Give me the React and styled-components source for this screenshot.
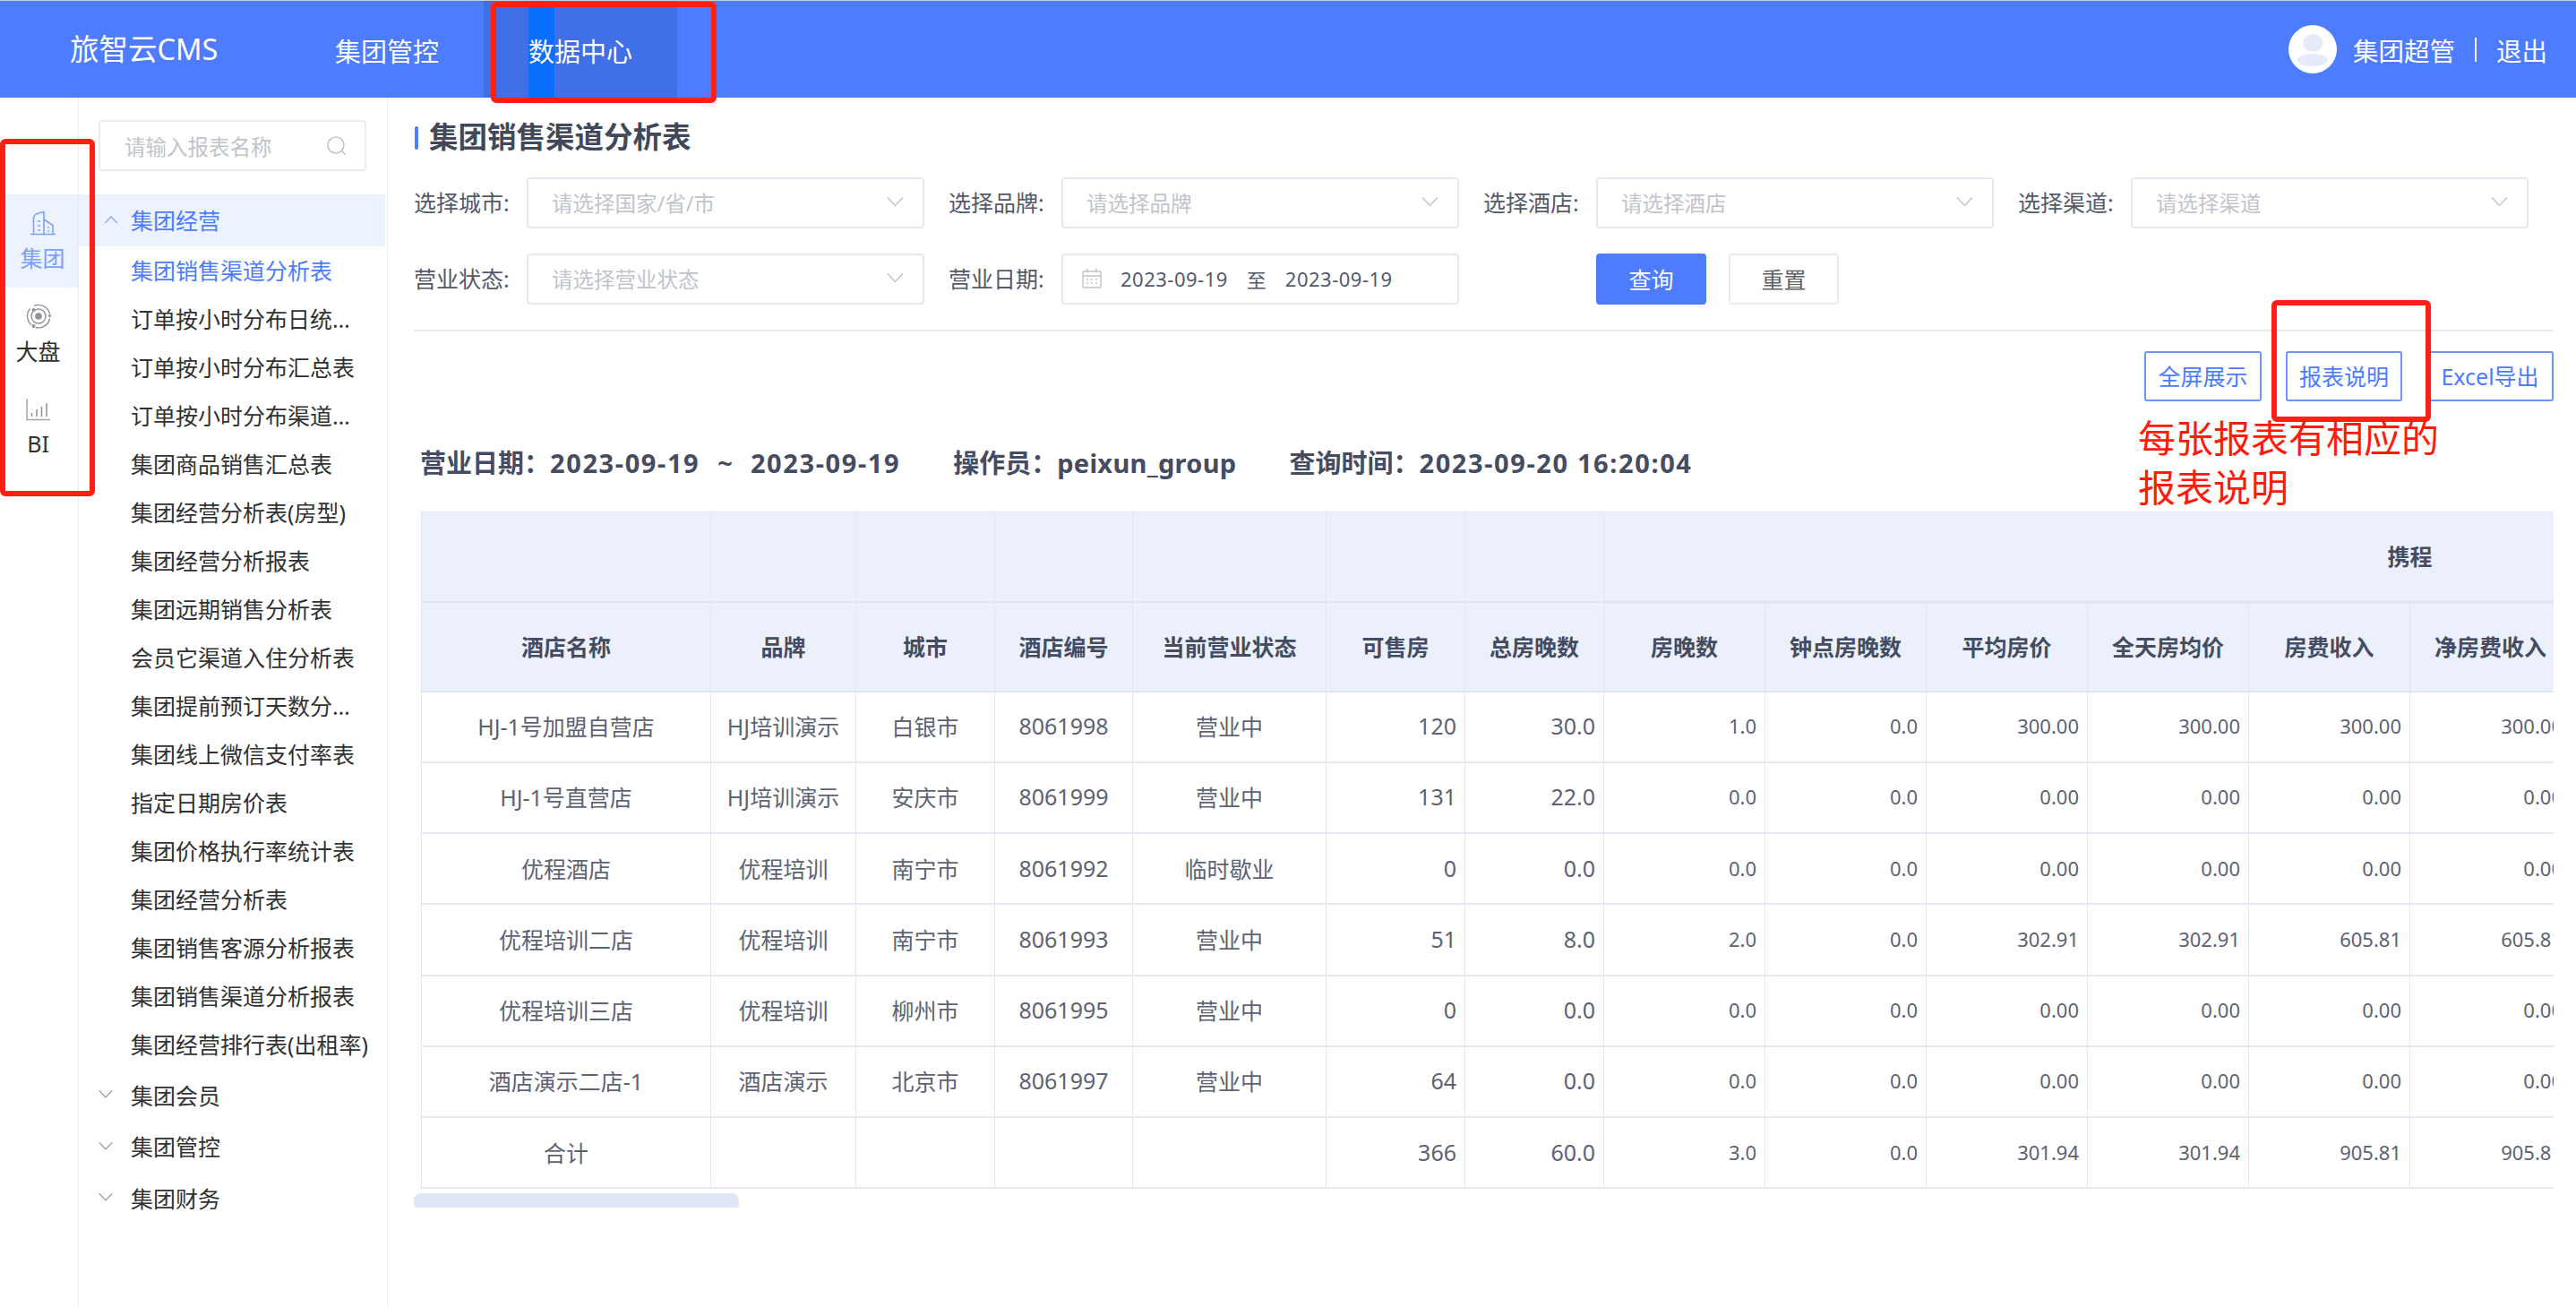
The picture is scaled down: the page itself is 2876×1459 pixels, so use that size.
import React from "react";
import styled, {createGlobalStyle} from "styled-components";

const FONT = `"Noto Sans", "Noto Sans CJK SC", sans-serif`;

const menuItems = [
  "集团销售渠道分析表",
  "订单按小时分布日统计表",
  "订单按小时分布汇总表",
  "订单按小时分布渠道汇总表",
  "集团商品销售汇总表",
  "集团经营分析表(房型)",
  "集团经营分析报表",
  "集团远期销售分析表",
  "会员它渠道入住分析表",
  "集团提前预订天数分析表",
  "集团线上微信支付率表",
  "指定日期房价表",
  "集团价格执行率统计表",
  "集团经营分析表",
  "集团销售客源分析报表",
  "集团销售渠道分析报表",
  "集团经营排行表(出租率)",
];

const columns = [323, 162, 155, 154, 216, 155, 155, 180, 180, 180, 180, 180, 180, 180, 180, 180, 180];
const fixedHead = ["酒店名称", "品牌", "城市", "酒店编号", "当前营业状态", "可售房", "总房晚数"];
const ctripHead = ["房晚数", "钟点房晚数", "平均房价", "全天房均价", "房费收入", "净房费收入", "", "", "", ""];

const rows = [
  ["HJ-1号加盟自营店", "HJ培训演示", "白银市", "8061998", "营业中", "120", "30.0", "1.0", "0.0", "300.00", "300.00", "300.00", "300.00"],
  ["HJ-1号直营店", "HJ培训演示", "安庆市", "8061999", "营业中", "131", "22.0", "0.0", "0.0", "0.00", "0.00", "0.00", "0.00"],
  ["优程酒店", "优程培训", "南宁市", "8061992", "临时歇业", "0", "0.0", "0.0", "0.0", "0.00", "0.00", "0.00", "0.00"],
  ["优程培训二店", "优程培训", "南宁市", "8061993", "营业中", "51", "8.0", "2.0", "0.0", "302.91", "302.91", "605.81", "605.81"],
  ["优程培训三店", "优程培训", "柳州市", "8061995", "营业中", "0", "0.0", "0.0", "0.0", "0.00", "0.00", "0.00", "0.00"],
  ["酒店演示二店-1", "酒店演示", "北京市", "8061997", "营业中", "64", "0.0", "0.0", "0.0", "0.00", "0.00", "0.00", "0.00"],
  ["合计", "", "", "", "", "366", "60.0", "3.0", "0.0", "301.94", "301.94", "905.81", "905.81"],
];

const Chevron = ({up, size = 19, color = "#c0c4cc"}) => (
  <svg width={size} height={size * 0.55} viewBox="0 0 20 11" fill="none" stroke={color} strokeWidth="1.5">
    <path d={up ? "M1 10.500L10 1l9 9.500" : "M1 .5L10 10l9-9.500"}/>
  </svg>
);

const SearchIcon = () => (
  <svg width="24" height="24" viewBox="0 0 24 24" fill="none" stroke="#c0c4cc" strokeWidth="1.6">
    <circle cx="11" cy="11" r="9"/>
    <path d="M17.500 17.500l4 4"/>
  </svg>
);

const CalendarIcon = () => (
  <svg width="22" height="22" viewBox="0 0 22 22" fill="none" stroke="#c0c4cc" strokeWidth="1.4">
    <rect x="1" y="3" width="20" height="18" rx="1"/>
    <path d="M1 8h20M6 0v4M16 0v4M5 12h2M10 12h2M15 12h2M5 16h2M10 16h2M15 16h2"/>
  </svg>
);

const BuildingIcon = () => (
  <svg width="30" height="28" viewBox="0 0 30 28" fill="none" stroke="#7d9ffc" strokeWidth="1.6">
    <path d="M1 26.500h28M4.500 26V9.500Q4.500 4 10 3l6-1.500V26M16 10l10 6.500V26M9 12h3M9 17h3M9 22h3M20 19h2M20 23h2"/>
  </svg>
);

const OrbitIcon = () => (
  <svg width="28" height="28" viewBox="0 0 28 28" fill="none" stroke="#8e919a" strokeWidth="1.400">
    <path d="M9 2.500A12.800 12.800 0 0 1 26.600 11.500M26.600 16.500A12.800 12.800 0 0 1 11 26.500M6 23.500A12.800 12.800 0 0 1 4.500 5.500"/>
    <circle cx="14" cy="14" r="8"/>
    <circle cx="14" cy="14" r="3.800" fill="#8e919a" stroke="none"/>
    <circle cx="8.500" cy="7" r="2" fill="#8e919a" stroke="none"/>
    <circle cx="26.500" cy="13.500" r="1.500" fill="#8e919a" stroke="none"/>
    <circle cx="8.500" cy="25" r="2" fill="#8e919a" stroke="none"/>
  </svg>
);

const BarsIcon = () => (
  <svg width="27" height="25" viewBox="0 0 27 25" fill="none" stroke="#a2a5ac" strokeWidth="1.500">
    <path d="M1 0v23.500h26"/>
    <path d="M6.500 20v-4M12 20V12M17.500 20V9M23 20V5" stroke="#8e919a"/>
  </svg>
);

const App = () => {
  return (
      <Page>
        <GlobalStyle/>
        <Header>
          <Logo>旅智云CMS</Logo>
          <NavItem>集团管控</NavItem>
          <NavItem $active><NavText>数据中心</NavText></NavItem>
          <UserBox>
            <Avatar/>
            <span>集团超管</span>
            <UserDivider/>
            <span>退出</span>
          </UserBox>
        </Header>

        <Body>
          <Rail>
            <RailItem $active>
              <BuildingIcon/>
              <RailLabel>集团</RailLabel>
            </RailItem>
            <RailItem>
              <OrbitIcon/>
              <RailLabel>大盘</RailLabel>
            </RailItem>
            <RailItem>
              <BarsIcon/>
              <RailLabel>BI</RailLabel>
            </RailItem>
          </Rail>

          <MenuPanel>
            <SearchBox>
              <SearchText>请输入报表名称</SearchText>
              <SearchIcon/>
            </SearchBox>
            <MenuSection $open>
              <Chevron up size={16} color="#7d9ffc"/>
              集团经营
            </MenuSection>
            {menuItems.map((item, i) => (
                <MenuItem key={item} $active={i === 0}>{item}</MenuItem>
            ))}
            <MenuSection><Chevron size={16} color="#909399"/>集团会员</MenuSection>
            <MenuSection><Chevron size={16} color="#909399"/>集团管控</MenuSection>
            <MenuSection><Chevron size={16} color="#909399"/>集团财务</MenuSection>
          </MenuPanel>

          <Main>
            <Title>集团销售渠道分析表</Title>
            <Filters>
              <Field>
                <FieldLabel>选择城市:</FieldLabel>
                <Select><span>请选择国家/省/市</span><Chevron/></Select>
              </Field>
              <Field>
                <FieldLabel>选择品牌:</FieldLabel>
                <Select><span>请选择品牌</span><Chevron/></Select>
              </Field>
              <Field>
                <FieldLabel>选择酒店:</FieldLabel>
                <Select><span>请选择酒店</span><Chevron/></Select>
              </Field>
              <Field>
                <FieldLabel>选择渠道:</FieldLabel>
                <Select><span>请选择渠道</span><Chevron/></Select>
              </Field>
              <Field>
                <FieldLabel>营业状态:</FieldLabel>
                <Select><span>请选择营业状态</span><Chevron/></Select>
              </Field>
              <Field>
                <FieldLabel>营业日期:</FieldLabel>
                <DateRange>
                  <CalendarIcon/>
                  <DateText>2023-09-19</DateText>
                  <span>至</span>
                  <DateText>2023-09-19</DateText>
                </DateRange>
              </Field>
              <ButtonGroup>
                <Button $primary>查询</Button>
                <Button>重置</Button>
              </ButtonGroup>
            </Filters>
            <Divider/>
            <Actions>
              <OutlineButton $width={131}>全屏展示</OutlineButton>
              <OutlineButton $width={130}>报表说明</OutlineButton>
              <OutlineButton $width={142}>Excel导出</OutlineButton>
            </Actions>
            <InfoLine>
              <span>营业日期：<Num>2023-09-19</Num><Tilde>~</Tilde><Num>2023-09-19</Num></span>
              <span>操作员：<Num $spacing={0.3}>peixun_group</Num></span>
              <span>查询时间：<Num>2023-09-20 16:20:04</Num></span>
            </InfoLine>

            <TableWrap>
              <Table>
                <colgroup>
                  {columns.map((w, i) => <col key={i} style={{width: w}}/>)}
                </colgroup>
                <thead>
                  <tr>
                    {fixedHead.map((h, i) => <Th key={i}/>)}
                    <Th colSpan={10} $group>携程</Th>
                  </tr>
                  <tr>
                    {fixedHead.map(h => <Th key={h}>{h}</Th>)}
                    {ctripHead.map((h, i) => <Th key={i}>{h}</Th>)}
                  </tr>
                </thead>
                <tbody>
                  {rows.map((row, r) => (
                      <tr key={r}>
                        {row.map((cell, i) => (
                            <Td key={i} $align={i < 5 ? "center" : "right"} $small={i > 6}>{cell}</Td>
                        ))}
                        {[0, 1, 2, 3].map(i => <Td key={"x" + i}/>)}
                      </tr>
                  ))}
                </tbody>
              </Table>
            </TableWrap>
            <ScrollTrack>
              <ScrollThumb/>
            </ScrollTrack>
          </Main>
        </Body>

        <NavMark/>
        <RailMark/>
        <ButtonMark/>
        <Note>每张报表有相应的<br/>报表说明</Note>
      </Page>
  );
};

const GlobalStyle = createGlobalStyle`
    html, body {
        margin: 0;
        padding: 0;
        background: #fff;
    }
    * {
        box-sizing: border-box;
    }
`;

const Page = styled.div`
    position: relative;
    width: 2876px;
    height: 1459px;
    overflow: hidden;
    font-family: ${FONT};
    font-size: 25px;
    color: #303133;
`;

const Header = styled.header`
    display: flex;
    align-items: stretch;
    height: 109px;
    padding-left: 78px;
    background: #4d7cfe;
    border-top: 1px solid #c5cede;
    color: #fff;
`;

const Logo = styled.div`
    width: 246px;
    font-size: 32.500px;
    line-height: 108px;
`;

const NavItem = styled.div`
    position: relative;
    display: flex;
    align-items: center;
    padding: 2px 50px 0;
    font-size: 29px;
    background: ${props => props.$active ? "#406fe6" : "transparent"};
    &::before {
        content: "";
        display: ${props => props.$active ? "block" : "none"};
        position: absolute;
        top: 0;
        bottom: 0;
        left: 50px;
        width: 29px;
        background: #0a6ffa;
    }
`;

const NavText = styled.span`
    position: relative;
`;

const UserBox = styled.div`
    display: flex;
    align-items: center;
    gap: 20px;
    margin-left: auto;
    padding-right: 32px;
    font-size: 28.500px;
`;

const Avatar = styled.div`
    position: relative;
    width: 54px;
    height: 54px;
    margin-right: -2px;
    border-radius: 50%;
    overflow: hidden;
    background: #fff;
    &::before {
        content: "";
        position: absolute;
        left: 16px;
        top: 10px;
        width: 22px;
        height: 20px;
        border-radius: 50%;
        background: #e6ebfa;
    }
    &::after {
        content: "";
        position: absolute;
        left: 10px;
        top: 32px;
        width: 34px;
        height: 14px;
        border-radius: 50%;
        background: #e6ebfa;
    }
`;

const UserDivider = styled.div`
    width: 2px;
    height: 27px;
    margin: 0 2px;
    background: #fff;
`;

const Body = styled.div`
    display: flex;
    height: 1350px;
`;

const Rail = styled.aside`
    flex: 0 0 88px;
    padding-top: 108px;
    border-right: 1px solid #e6ebf5;
`;

const RailItem = styled.div`
    display: flex;
    flex-direction: column;
    align-items: center;
    justify-content: flex-start;
    gap: 8px;
    height: ${props => props.$active ? "104px" : "106px"};
    margin-left: ${props => props.$active ? "3px" : "0"};
    margin-bottom: ${props => props.$active ? "18px" : "0"};
    padding: ${props => props.$active ? "18px 0 0 2px" : "0 2px 0 0"};
    color: ${props => props.$active ? "#7d9ffc" : "#303133"};
    background: ${props => props.$active ? "#ecf3fe" : "transparent"};
    border-left: ${props => props.$active ? "3px solid #4d7cfe" : "none"};
`;

const RailLabel = styled.div`
    font-size: 25px;
    line-height: 34px;
`;

const MenuPanel = styled.nav`
    flex: 0 0 345px;
    padding-top: 25px;
    border-right: 1px solid #e6ebf5;
`;

const SearchBox = styled.div`
    display: flex;
    align-items: center;
    justify-content: space-between;
    width: 299px;
    height: 57px;
    margin: 0 0 26px 22px;
    padding: 0 19px 0 27px;
    border: 2px solid #e9ebf1;
    border-radius: 4px;
`;

const SearchText = styled.span`
    font-size: 23.500px;
    color: #c0c4cc;
`;

const MenuSection = styled.div`
    display: flex;
    align-items: center;
    gap: ${props => props.$open ? "14px" : "20px"};
    height: ${props => props.$open ? "58px" : "57.500px"};
    margin-right: 2px;
    padding: ${props => props.$open ? "0 0 2px 28px" : "0 0 0 22px"};
    color: ${props => props.$open ? "#4d7cfe" : "#303133"};
    background: ${props => props.$open ? "#ecf3fe" : "transparent"};
`;

const MenuItem = styled.div`
    width: 267px;
    height: 54px;
    margin-left: 58px;
    line-height: 54px;
    white-space: nowrap;
    overflow: hidden;
    text-overflow: ellipsis;
    color: ${props => props.$active ? "#4d7cfe" : "#303133"};
`;

const Main = styled.main`
    flex: 1;
    min-width: 0;
    padding: 27px 25px 0 29px;
`;

const Title = styled.h1`
    position: relative;
    margin: 0 0 28px;
    padding-left: 17px;
    font-size: 32.500px;
    font-weight: 700;
    line-height: 34px;
    color: #414859;
    &::before {
        content: "";
        position: absolute;
        left: 1px;
        top: 5px;
        width: 4px;
        height: 26px;
        border-radius: 2px;
        background: #4d7cfe;
    }
`;

const Filters = styled.section`
    display: grid;
    grid-template-columns: repeat(4, 570px);
    column-gap: 27px;
    row-gap: 28px;
`;

const Field = styled.div`
    display: flex;
    align-items: center;
`;

const FieldLabel = styled.label`
    flex: 0 0 126px;
    padding-bottom: 3px;
    color: #54596a;
`;

const Select = styled.div`
    display: flex;
    align-items: center;
    justify-content: space-between;
    width: 444px;
    height: 57px;
    padding: 0 21px 2px 26px;
    border: 2px solid #e6e8ef;
    border-radius: 4px;
    font-size: 23.500px;
    color: #c0c4cc;
`;

const DateRange = styled.div`
    display: flex;
    align-items: center;
    gap: 21px;
    width: 444px;
    height: 57px;
    padding: 0 0 2px 21px;
    border: 2px solid #e6e8ef;
    border-radius: 4px;
    font-size: 22px;
    color: #54596a;
`;

const DateText = styled.span`
    letter-spacing: 0.500px;
`;

const ButtonGroup = styled.div`
    display: flex;
    gap: 25px;
    padding-left: 126px;
`;

const Button = styled.button`
    width: 123px;
    height: 57px;
    padding: 0 0 2px;
    font-family: inherit;
    font-size: 25px;
    border-radius: 4px;
    border: 2px solid ${props => props.$primary ? "#4d7cfe" : "#e9ebf1"};
    background: ${props => props.$primary ? "#4d7cfe" : "#fff"};
    color: ${props => props.$primary ? "#fff" : "#606266"};
`;

const Divider = styled.div`
    height: 2px;
    margin-top: 28px;
    background: #e8eaef;
`;

const Actions = styled.div`
    display: flex;
    justify-content: flex-end;
    gap: 27px;
    margin-top: 22px;
`;

const OutlineButton = styled.button`
    width: ${props => props.$width}px;
    height: 56px;
    padding: 0 0 2px;
    font-family: inherit;
    font-size: 25px;
    color: #4d7cfe;
    background: #fff;
    border: 2px solid #6d93fc;
    border-radius: 3px;
`;

const InfoLine = styled.div`
    display: flex;
    gap: 59px;
    margin-top: 49px;
    padding-left: 7px;
    font-size: 29px;
    font-weight: 700;
    line-height: 40px;
    color: #454c61;
`;

const Num = styled.span`
    letter-spacing: ${props => props.$spacing ?? 1.6}px;
`;

const Tilde = styled.span`
    margin: 0 20px;
`;

const TableWrap = styled.div`
    margin: 34px 0 0 8px;
    overflow: hidden;
`;

const Table = styled.table`
    table-layout: fixed;
    width: 3120px;
    border-collapse: collapse;
`;

const Th = styled.th`
    height: 100px;
    padding: 0 0 2px;
    font-size: 25px;
    font-weight: 700;
    text-align: center;
    color: #454c61;
    background: #ebf0fb;
    border: 1px solid #e2e6f2;
    border-bottom: ${props => props.$group ? "4px" : "2px"} solid #e2e6f2;
`;

const Td = styled.td`
    height: 79.250px;
    padding: 0 9px 2px;
    font-size: ${props => props.$small ? "22px" : "25px"};
    text-align: ${props => props.$align || "right"};
    white-space: nowrap;
    color: #5d6274;
    border: 1px solid #e6e9f4;
    border-bottom: 2px solid #e6e9f4;
`;

const ScrollTrack = styled.div`
    height: 16px;
    margin-top: 5px;
`;

const ScrollThumb = styled.div`
    width: 363px;
    height: 16px;
    border-radius: 8px 8px 4px 4px;
    background: #e1e7f7;
`;

const NavMark = styled.div`
    position: absolute;
    left: 548px;
    top: 2px;
    width: 252px;
    height: 113px;
    border: 6px solid #ff2013;
    border-radius: 6px;
`;

const RailMark = styled.div`
    position: absolute;
    left: 0;
    top: 155px;
    width: 106px;
    height: 399px;
    border: 6px solid #ff2013;
    border-radius: 6px;
`;

const ButtonMark = styled.div`
    position: absolute;
    left: 2536px;
    top: 335px;
    width: 178px;
    height: 136px;
    border: 6px solid #ff2013;
    border-radius: 6px;
`;

const Note = styled.div`
    position: absolute;
    left: 2387px;
    top: 461px;
    font-size: 42px;
    line-height: 55px;
    color: #ff1a0a;
`;

export default App;
